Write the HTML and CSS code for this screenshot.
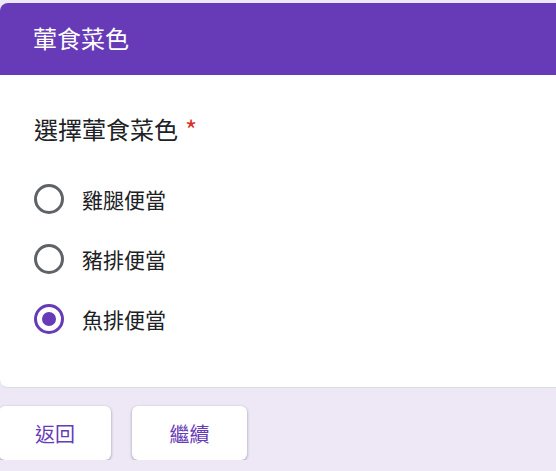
FILE: index.html
```html
<!DOCTYPE html>
<html lang="zh-Hant">
<head>
<meta charset="utf-8">
<link rel="stylesheet" href="styles.css">
</head>
<body>
<div class="page">
  <section class="card">
    <header class="card-header">葷食菜色</header>
    <div class="card-body">
      <div class="question">選擇葷食菜色<span class="required">*</span></div>
      <div class="options">
        <label class="option"><span class="radio"></span><span class="option-text">雞腿便當</span></label>
        <label class="option"><span class="radio"></span><span class="option-text">豬排便當</span></label>
        <label class="option"><span class="radio checked"></span><span class="option-text">魚排便當</span></label>
      </div>
    </div>
  </section>
  <div class="actions">
    <button class="btn btn-back">返回</button>
    <button class="btn btn-next">繼續</button>
  </div>
</div>
</body>
</html>
```

FILE: styles.css
```css
* { box-sizing: border-box; }
html, body {
  margin: 0;
  padding: 0;
  background: #ede7f6;
  font-family: "Noto Sans CJK TC", "Noto Sans", sans-serif;
  color: #202124;
  overflow: hidden;
}
.page {
  padding-top: 3px;
}
.card {
  background: #fff;
  border-radius: 8px 0 0 8px;
  border-bottom: 1px solid #dadce0;
  margin-right: -20px;
}
.card-header {
  background: #673ab7;
  color: #fff;
  height: 72px;
  border-radius: 8px 0 0 0;
  display: flex;
  align-items: center;
  padding-left: 33px;
  font-size: 24px;
  line-height: 32px;
  padding-bottom: 2px;
}
.card-body {
  padding: 38px 0 38px 34px;
}
.question {
  font-size: 24px;
  line-height: 32px;
  display: flex;
  align-items: flex-start;
}
.required {
  color: #d93025;
  font-size: 26px;
  margin-left: 7px;
  line-height: 32px;
}
.options {
  margin-top: 24px;
  display: flex;
  flex-direction: column;
}
.option {
  display: flex;
  align-items: center;
  height: 60px;
}
.radio {
  width: 30px;
  height: 30px;
  border: 3px solid #5f6368;
  border-radius: 50%;
  display: flex;
  align-items: center;
  justify-content: center;
  flex: none;
}
.radio.checked {
  border-color: #673ab7;
}
.radio.checked::after {
  content: "";
  width: 14px;
  height: 14px;
  border-radius: 50%;
  background: #673ab7;
}
.option-text {
  margin-left: 18px;
  font-size: 21px;
  line-height: 30px;
}
.actions {
  display: flex;
  gap: 21px;
  margin-top: 18px;
  margin-left: -1px;
}
.btn {
  height: 54px;
  border: none;
  background: #fff;
  border-radius: 6px;
  box-shadow: 0 1px 3px rgba(0,0,0,0.35);
  color: #673ab7;
  font-family: "Noto Sans CJK TC", "Noto Sans", sans-serif;
  font-size: 20px;
  padding: 0;
}
.btn-back { width: 112px; }
.btn-next { width: 115px; }
```
